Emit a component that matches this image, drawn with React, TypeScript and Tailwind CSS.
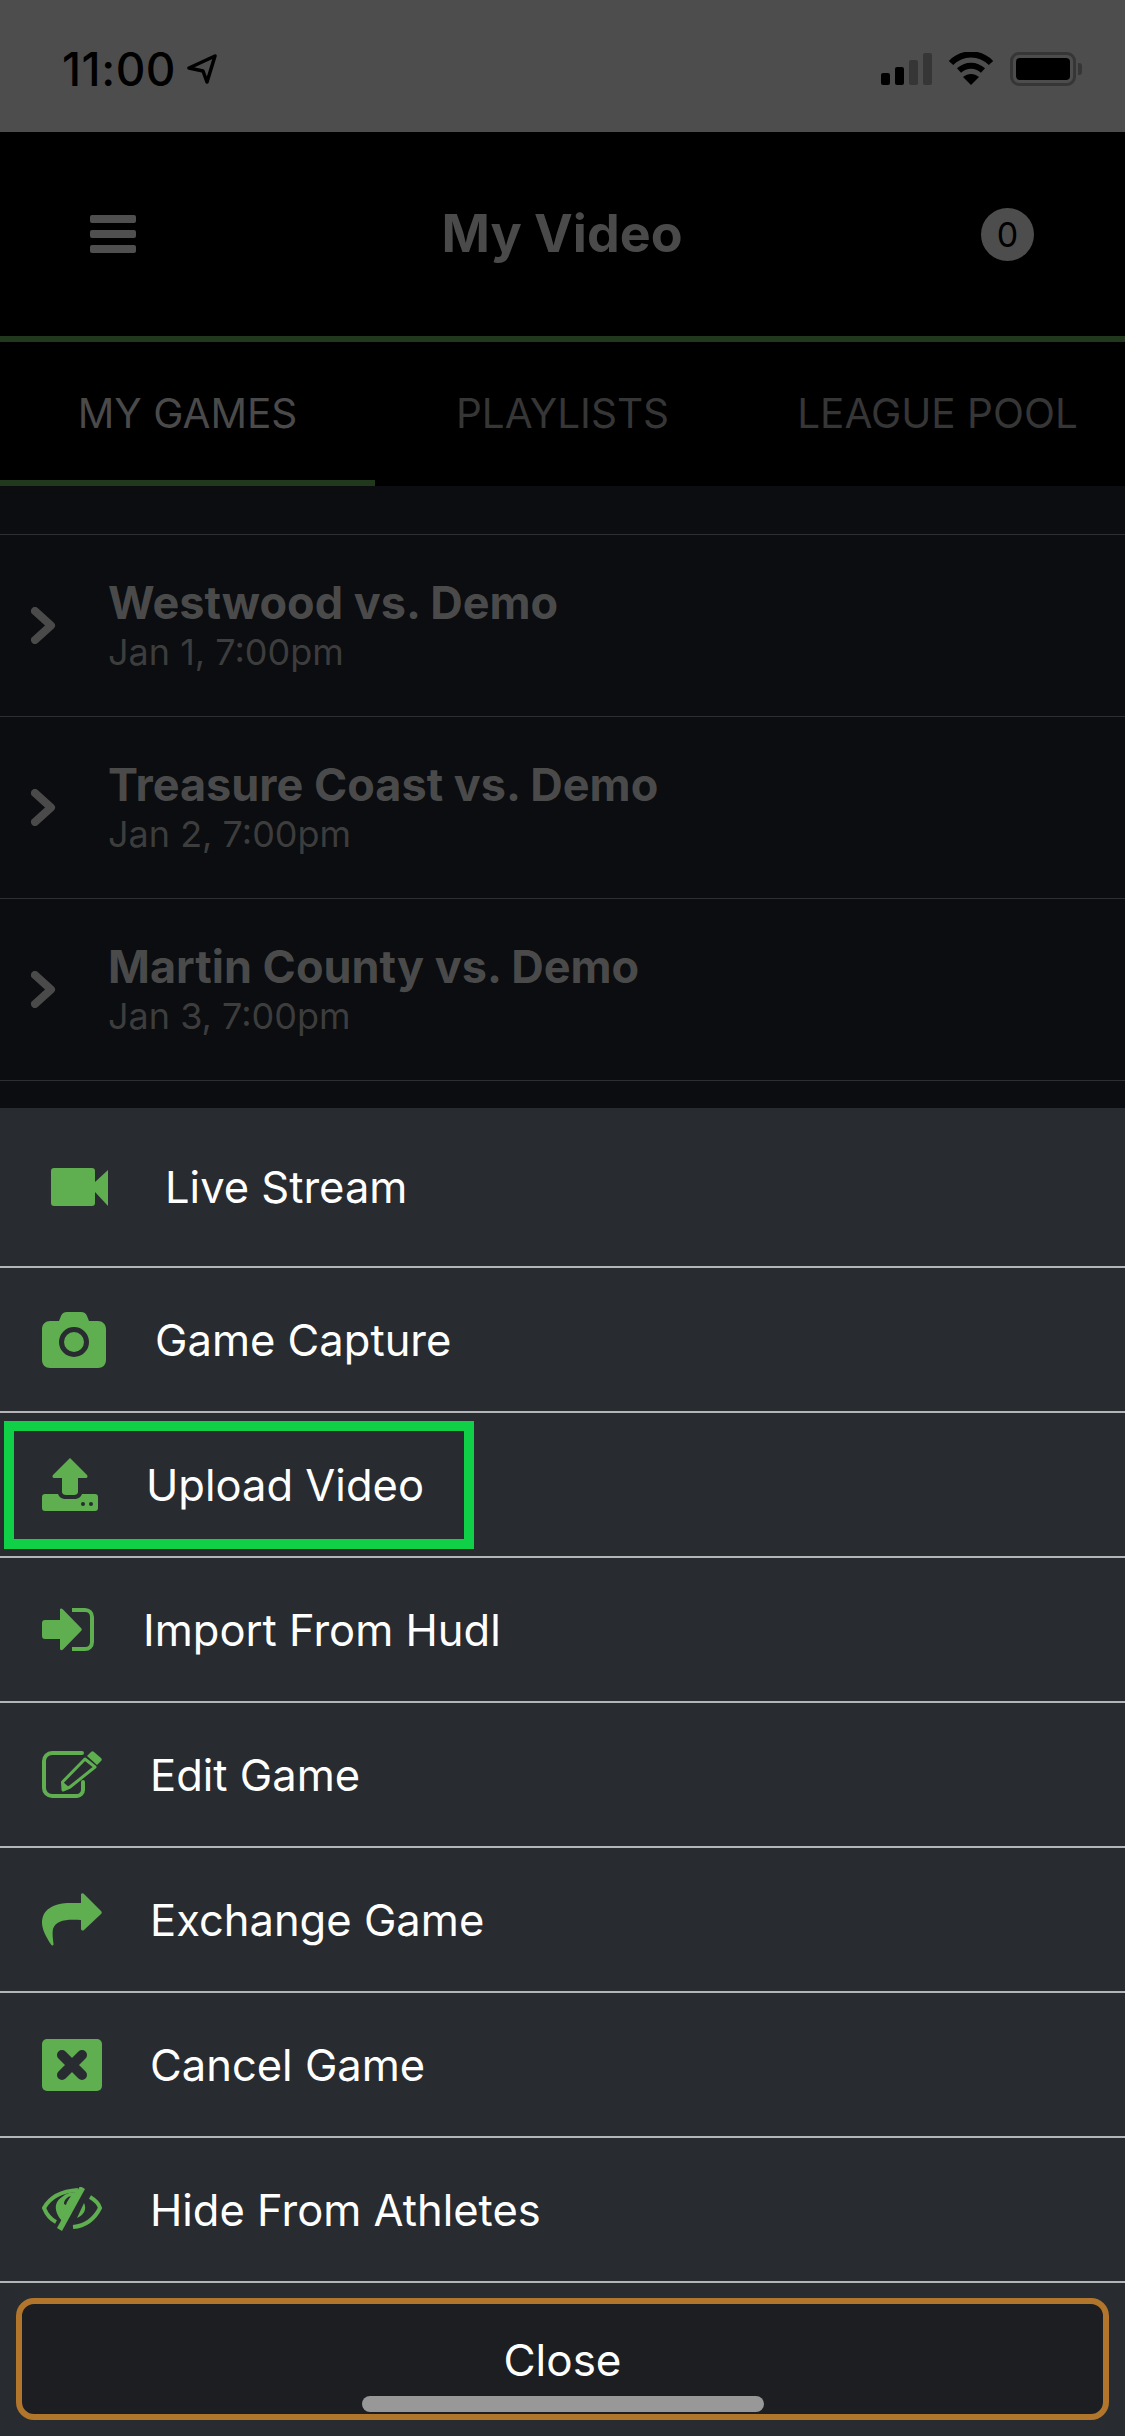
import React from 'react';

const GREEN = '#5fae50';

const games = [
  { title: 'Westwood vs. Demo', date: 'Jan 1, 7:00pm' },
  { title: 'Treasure Coast vs. Demo', date: 'Jan 2, 7:00pm' },
  { title: 'Martin County vs. Demo', date: 'Jan 3, 7:00pm' },
];

const VideoIcon = () => (
  <svg width="57" height="38" viewBox="0 0 57 38" fill={GREEN}>
    <rect x="0" y="0" width="44" height="38" rx="3" />
    <path d="M44 14 57 2v36L44 24z" />
  </svg>
);

const CameraIcon = () => (
  <svg width="64" height="56" viewBox="0 0 64 56">
    <path
      fill={GREEN}
      d="M8 9h9l2-5c1-2.500 3-4 6-4h14c3 0 5 1.500 6 4l2 5h9c4.400 0 8 3 8 8v31c0 5-3.600 8-8 8H8c-4.400 0-8-3-8-8V17c0-5 3.600-8 8-8z"
    />
    <circle cx="32" cy="30" r="12.500" fill="none" stroke="#282b30" strokeWidth="5" />
  </svg>
);

const UploadIcon = () => (
  <svg width="56" height="53" viewBox="0 0 56 53">
    <path fill={GREEN} d="M28 0 45 17c1 1 .5 3-1 3H36v14c0 2-2 3-4 3h-8c-2 0-4-1-4-3V20H12c-1.500 0-2-2-1-3z" />
    <path
      fill={GREEN}
      d="M3 36h13c1 3 4 5 8 5h8c4 0 7-2 8-5h13c2 0 3 1 3 3v11c0 2-1 3-3 3H3c-2 0-3-1-3-3V39c0-2 1-3 3-3z"
    />
    <circle cx="41" cy="46" r="2" fill="#282b30" />
    <circle cx="49" cy="46" r="2" fill="#282b30" />
  </svg>
);

const ImportIcon = () => (
  <svg width="52" height="43" viewBox="0 0 52 43">
    <path fill={GREEN} d="M18 1c1-1 2-.5 3 .5L39 20c1 1 1 2 0 3L21 41.500c-1 1-3 1-3-1V31H3c-2 0-3-1-3-3V15c0-2 1-3 3-3h15V2z" />
    <path fill="none" stroke={GREEN} strokeWidth="4" d="M30 2h13c4 0 7 3 7 7v25c0 4-3 7-7 7H30" />
  </svg>
);

const EditIcon = () => (
  <svg width="60" height="47" viewBox="0 0 60 47">
    <path
      fill="none"
      stroke={GREEN}
      strokeWidth="4"
      strokeLinecap="round"
      d="M40 2H10C5.500 2 2 5.500 2 10v27c0 4.500 3.500 8 8 8h25c3 0 6-3 6-6v-8"
    />
    <path fill={GREEN} d="M49 1c1-1 2-1 3 0l7 6c1 1 1 2 0 3l-4 4-10-9z" />
    <path
      fill="none"
      stroke={GREEN}
      strokeWidth="3"
      strokeLinejoin="round"
      d="M43 8 53 16 28 36l-7 3-.5-8z"
    />
    <path fill={GREEN} d="M21 31 28 37 21 39z" />
  </svg>
);

const ShareIcon = () => (
  <svg width="60" height="53" viewBox="0 0 60 53">
    <path
      fill={GREEN}
      d="M39 1c1-1 2-1 3 0l17 17c1 1 1 2 0 3L42 37c-1 1-3 .5-3-1V27c-15-1-25 0-28 9-1 4 0 10 .5 15 0 2-1.500 2-2.500.5C4 44 0 36 0 30 0 16 12 11 25 10h14z"
    />
  </svg>
);

const CancelIcon = () => (
  <svg width="60" height="52" viewBox="0 0 60 52">
    <rect width="60" height="52" rx="5" fill={GREEN} />
    <path stroke="#282b30" strokeWidth="10" strokeLinecap="round" d="M20 16 40 36M40 16 20 36" />
  </svg>
);

const HideIcon = () => (
  <svg width="60" height="45" viewBox="0 0 60 45">
    <path fill="none" stroke={GREEN} strokeWidth="4" d="M14 35C8 32 4 26 2 21 8 10 20 4 36 3" />
    <path fill={GREEN} d="M20 10c4-4 10-5 16-5L20 34c-5-5-7-12-6-16 1-4 3-6 6-8z" />
    <path fill="#282b30" d="M22 17c0-4 3-7 7-8-2 3-4 5-5 9z" />
    <path fill={GREEN} d="M38-1 43 2 20 44 15 41z" />
    <path fill="none" stroke={GREEN} strokeWidth="4" d="M48 10c5 3 9 7 10 11-6 12-16 18-27 19" />
    <path fill={GREEN} d="M42 16c3 6 0 12-7 15z" />
  </svg>
);

const Chevron = () => (
  <svg width="25" height="37" viewBox="0 0 25 37" className="shrink-0">
    <path fill="none" stroke="#4a4a4a" strokeWidth="8" strokeLinecap="round" strokeLinejoin="round" d="M4 4 20 18.500 4 33" />
  </svg>
);

const actions = [
  { label: 'Live Stream', icon: <VideoIcon />, pad: 'pl-[51px]', gap: 'gap-[57px]', height: 'h-[160px]' },
  { label: 'Game Capture', icon: <CameraIcon />, pad: 'pl-[42px]', gap: 'gap-[49px]', height: 'h-[145px]' },
  { label: 'Upload Video', icon: <UploadIcon />, pad: 'pl-[42px]', gap: 'gap-[48px]', height: 'h-[145px]' },
  { label: 'Import From Hudl', icon: <ImportIcon />, pad: 'pl-[42px]', gap: 'gap-[49px]', height: 'h-[145px]' },
  { label: 'Edit Game', icon: <EditIcon />, pad: 'pl-[42px]', gap: 'gap-[48px]', height: 'h-[145px]' },
  { label: 'Exchange Game', icon: <ShareIcon />, pad: 'pl-[42px]', gap: 'gap-[48px]', height: 'h-[145px]' },
  { label: 'Cancel Game', icon: <CancelIcon />, pad: 'pl-[42px]', gap: 'gap-[48px]', height: 'h-[145px]' },
  { label: 'Hide From Athletes', icon: <HideIcon />, pad: 'pl-[42px]', gap: 'gap-[48px]', height: 'h-[145px]' },
];

const StatusBar = () => (
  <div className="h-[132px] bg-[#4d4d4d] flex items-center justify-between pl-[62px] pr-[43px] pt-[5px]">
    <div className="flex items-center gap-[11px] text-black">
      <span className="text-[46px] leading-none font-medium tracking-[0.5px]">11:00</span>
      <svg width="30" height="30" viewBox="0 0 30 30">
        <path fill="none" stroke="#000" strokeWidth="3.500" strokeLinejoin="round" d="M28 2 2 14l14 3 4 11z" />
      </svg>
    </div>
    <div className="flex items-center gap-[16px]">
      <div className="flex items-end gap-[5px]">
        <div className="w-[9px] h-[12px] rounded-[2px] bg-black" />
        <div className="w-[9px] h-[18px] rounded-[2px] bg-black" />
        <div className="w-[9px] h-[25px] rounded-[2px] bg-[#363636]" />
        <div className="w-[9px] h-[32px] rounded-[2px] bg-[#363636]" />
      </div>
      <svg width="46" height="33" viewBox="0 0 46 33">
        <path fill="none" stroke="#000" strokeWidth="6" d="M3 11C14-.500 32-.500 43 11" />
        <path fill="none" stroke="#000" strokeWidth="6" d="M11 18.500c7-6.500 17-6.500 24 0" />
        <path d="M15 25c5-4 11-4 16 0l-8 8z" />
      </svg>
      <div className="flex items-center gap-[2px]">
        <div className="w-[66px] h-[34px] rounded-[9px] border-[3px] border-[#363636] p-[3px]">
          <div className="w-full h-full rounded-[4px] bg-black" />
        </div>
        <div className="w-[4px] h-[12px] rounded-r-[3px] bg-[#363636]" />
      </div>
    </div>
  </div>
);

export default function App() {
  return (
    <div className="relative w-[1125px] h-[2436px] overflow-hidden bg-[#282b30] font-['Inter',sans-serif]">
      <StatusBar />

      {/* Dimmed page behind the sheet */}
      <div className="h-[204px] bg-black flex items-center justify-between pl-[90px] pr-[91px]">
        <div className="w-[46px] flex flex-col gap-[7px]">
          <div className="h-[8px] rounded-[2px] bg-[#4f4f4f]" />
          <div className="h-[8px] rounded-[2px] bg-[#4f4f4f]" />
          <div className="h-[8px] rounded-[2px] bg-[#4f4f4f]" />
        </div>
        <h1 className="text-[52px] leading-none font-bold text-[#4a4a4a] ml-[7px]">My Video</h1>
        <div className="w-[53px] h-[53px] rounded-full bg-[#4d4d4d] flex items-center justify-center text-[34px] text-black">0</div>
      </div>
      <div className="h-[6px] bg-[#22381d]" />
      <div className="h-[144px] bg-black flex text-[40.5px]">
        <div className="w-[375px] flex items-center justify-center pt-[6px] border-b-[6px] border-[#22381d] text-[#4a4a4a]">MY GAMES</div>
        <div className="w-[375px] flex items-center justify-center pt-[6px] pb-[6px] text-[#363636]">PLAYLISTS</div>
        <div className="w-[375px] flex items-center justify-center pt-[6px] pb-[6px] text-[#363636]">LEAGUE POOL</div>
      </div>

      <div className="h-[622px] bg-[#0b0d10] pt-[48px]">
        {games.map((game) => (
          <div key={game.title} className="h-[182px] border-t border-[#2e2f31] flex items-center pl-[31px] last:h-[183px] last:border-b">
            <Chevron />
            <div className="ml-[52px] pt-[1px]">
              <div className="text-[45px] leading-[50px] font-bold text-[#4a4a4a]">{game.title}</div>
              <div className="text-[36px] leading-[44px] mt-[2px] text-[#3d3d3d]">{game.date}</div>
            </div>
          </div>
        ))}
      </div>

      {/* Action sheet */}
      <div className="bg-[#282b30]">
        {actions.map((action) => (
          <div
            key={action.label}
            className={`${action.height} ${action.pad} ${action.gap} flex items-center border-b-2 border-[#b4b5b6] text-[43.5px] leading-none text-white`}
          >
            <div className="shrink-0 flex">{action.icon}</div>
            <span className="pt-[2px]">{action.label}</span>
          </div>
        ))}
        <div className="mt-[15px] mx-[16px] h-[122px] rounded-[18px] border-[6px] border-[#b2752c] bg-[#1c1e22] flex items-center justify-center pt-[2px] text-[44px] text-white">
          Close
        </div>
      </div>

      {/* Highlight on the Upload Video row */}
      <div className="absolute left-[4px] top-[1421px] w-[470px] h-[128px] border-[10px] border-[#10d048]" />
      {/* Home indicator */}
      <div className="absolute left-[362px] top-[2396px] w-[402px] h-[16px] rounded-full bg-[#989898]" />
    </div>
  );
}
